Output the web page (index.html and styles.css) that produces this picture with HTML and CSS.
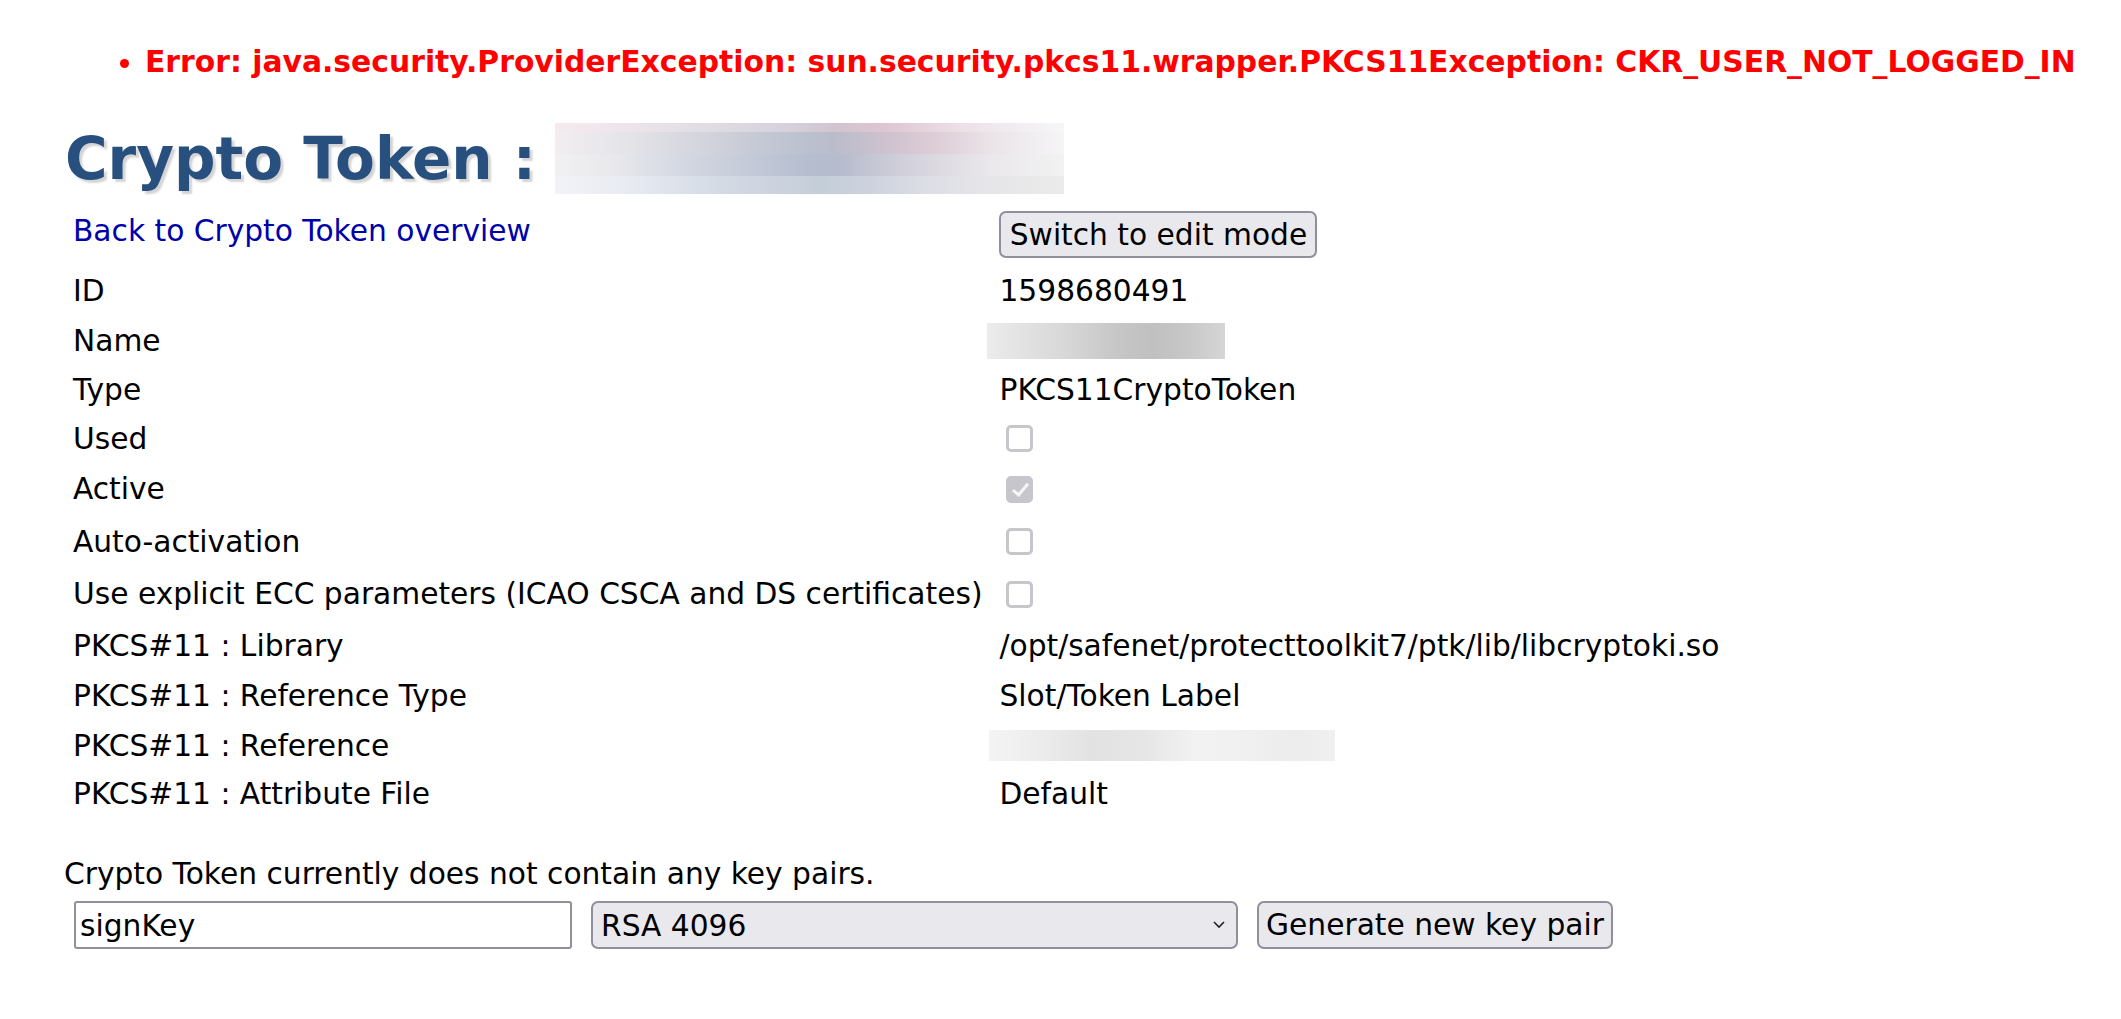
FILE: index.html
```html
<!DOCTYPE html>
<html lang="en">
<head>
<meta charset="utf-8">
<title>Crypto Token</title>
<link rel="stylesheet" href="styles.css">
</head>
<body>
<div class="page">
  <ul class="errors">
    <li>Error: java.security.ProviderException: sun.security.pkcs11.wrapper.PKCS11Exception: CKR_USER_NOT_LOGGED_IN</li>
  </ul>

  <h1 class="title"><span class="title-text">Crypto Token :</span><span class="blur blur-title"></span></h1>

  <div class="details">
    <div class="label first"><a class="back" href="#">Back to Crypto Token overview</a></div>
    <div class="value first"><button class="btn btn-edit" type="button">Switch to edit mode</button></div>

    <div class="label">ID</div>
    <div class="value">1598680491</div>

    <div class="label">Name</div>
    <div class="value"><span class="blur blur-name"></span></div>

    <div class="label">Type</div>
    <div class="value">PKCS11CryptoToken</div>

    <div class="label">Used</div>
    <div class="value"><span class="check"></span></div>

    <div class="label">Active</div>
    <div class="value"><span class="check checked"></span></div>

    <div class="label">Auto-activation</div>
    <div class="value"><span class="check"></span></div>

    <div class="label">Use explicit ECC parameters (ICAO CSCA and DS certificates)</div>
    <div class="value"><span class="check"></span></div>

    <div class="label">PKCS#11 : Library</div>
    <div class="value">/opt/safenet/protecttoolkit7/ptk/lib/libcryptoki.so</div>

    <div class="label">PKCS#11 : Reference Type</div>
    <div class="value">Slot/Token Label</div>

    <div class="label">PKCS#11 : Reference</div>
    <div class="value"><span class="blur blur-ref"></span></div>

    <div class="label">PKCS#11 : Attribute File</div>
    <div class="value">Default</div>
  </div>

  <p class="note">Crypto Token currently does not contain any key pairs.</p>

  <form class="keygen" action="#">
    <input class="field" type="text" value="signKey">
    <div class="select-wrap">
      <select class="select">
        <option>RSA 4096</option>
      </select>
      <svg class="chev" width="14" height="10" viewBox="0 0 14 10"><path d="M2 2 L7 7 L12 2" fill="none" stroke="#222" stroke-width="1.6"/></svg>
    </div>
    <button class="btn btn-gen" type="button">Generate new key pair</button>
  </form>
</div>
</body>
</html>
```

FILE: styles.css
```css
html, body {
  margin: 0;
  padding: 0;
  background: #ffffff;
}

body {
  font-family: "DejaVu Sans", Verdana, sans-serif;
  font-size: 29.7px;
  color: #000000;
}

.page {
  padding: 0 0 0 64px;
}

.errors {
  margin: 0;
  padding: 44px 0 0 81px;
  list-style: disc;
  color: #ff0000;
  font-weight: bold;
  font-size: 29.8px;
  line-height: 36px;
}

.title {
  display: flex;
  align-items: center;
  margin: 43px 0 0 1px;
  height: 71px;
  font-size: 58px;
  font-weight: bold;
  color: #28507f;
  text-shadow: 3px 3px 2px #d4d4d4;
}

.title-text {
  margin-right: 19px;
}

.blur {
  display: inline-block;
}

.blur-title {
  width: 509px;
  height: 71px;
  background:
    linear-gradient(90deg, #f5eaee 0%, #ede4ea 15%, #e0dce4 30%, #d6d2dc 45%, #d1c4d0 55%, #ddc6d0 65%, #ede0e6 80%, #f2eef2 92%, #f6f6f7 100%) 0 0 / 100% 9px no-repeat,
    linear-gradient(90deg, #f2edf1 0%, #e6e6ea 12%, #d8d8e0 25%, #c8cbd6 38%, #bcc2d0 48%, #bbbccb 55%, #cdc1ce 64%, #dcccd6 74%, #ebe4e9 86%, #f5f5f6 100%) 0 9px / 100% 22px no-repeat,
    linear-gradient(90deg, #f1f1f3 0%, #e8e8ec 12%, #d4d8e2 25%, #c4cad8 38%, #b5bdcf 50%, #b6bccd 56%, #ccccd8 66%, #dedae2 76%, #ebe8ec 86%, #f2f2f2 100%) 0 31px / 100% 22px no-repeat,
    linear-gradient(90deg, #f2f3f7 0%, #e8ebf2 14%, #d8dee8 28%, #cdd4df 42%, #c4ced9 52%, #cdd2de 62%, #dedfe6 74%, #e6e6e9 86%, #ebebeb 100%) 0 53px / 100% 18px no-repeat;
}

.blur-name {
  width: 238px;
  height: 36px;
  margin-left: -12px;
  background: linear-gradient(90deg, #ececec 0%, #e2e2e2 15%, #d6d6d6 35%, #c6c6c6 55%, #c0c0c0 70%, #c8c8c8 85%, #d6d6d6 100%);
}

.blur-ref {
  width: 346px;
  height: 31px;
  margin-left: -10px;
  background: linear-gradient(90deg, #f4f4f4 0%, #ececec 15%, #e2e2e2 30%, #e6e6e6 45%, #f2f2f2 60%, #f0f0f0 75%, #ececec 88%, #f0f0f0 100%);
}

.details {
  display: grid;
  grid-template-columns: max-content 1fr;
  grid-template-rows: 60px 50px 50px 48px 49px 52px 53px 52px 51px 50px 49px 48px;
  column-gap: 17px;
  margin: 12px 0 0 9px;
  line-height: 34px;
}

.label, .value {
  display: flex;
  align-items: center;
  white-space: nowrap;
}

.label.first {
  align-items: flex-start;
  padding-top: 8px;
}

.value.first {
  align-items: flex-start;
  padding-top: 5px;
}

.back {
  color: #0000aa;
  text-decoration: none;
}

.btn {
  font-family: "DejaVu Sans", Verdana, sans-serif;
  font-size: 29.7px;
  color: #000000;
  background: #e9e9ed;
  border: 2px solid #8f8f9d;
  border-radius: 7px;
  padding: 0 6px;
  line-height: 34px;
  white-space: nowrap;
}

.btn-edit {
  height: 47px;
  width: 318px;
}

.check {
  display: inline-block;
  box-sizing: border-box;
  width: 27px;
  height: 27px;
  margin-left: 7px;
  border: 3px solid #c6c6cc;
  border-radius: 5px;
  background: #ffffff;
  position: relative;
}

.check.checked {
  background: #c6c6cc;
}

.check.checked::after {
  content: "";
  position: absolute;
  left: 7px;
  top: 1px;
  width: 6px;
  height: 13px;
  border-right: 3px solid #f6f6f6;
  border-bottom: 3px solid #f6f6f6;
  transform: rotate(40deg);
}

.note {
  margin: 39px 0 0 0;
  line-height: 34px;
}

.keygen {
  display: flex;
  align-items: center;
  gap: 19px;
  margin: 10px 0 0 10px;
}

.field {
  box-sizing: border-box;
  width: 498px;
  height: 48px;
  font-family: "DejaVu Sans", Verdana, sans-serif;
  font-size: 29.7px;
  color: #000000;
  border: 2px solid #8f8f9d;
  border-radius: 3px;
  padding: 0 4px;
  background: #ffffff;
}

.select-wrap {
  position: relative;
  width: 647px;
  height: 48px;
}

.select {
  -webkit-appearance: none;
  appearance: none;
  box-sizing: border-box;
  width: 100%;
  height: 48px;
  font-family: "DejaVu Sans", Verdana, sans-serif;
  font-size: 29.7px;
  color: #000000;
  background: #e9e9ed;
  border: 2px solid #8f8f9d;
  border-radius: 7px;
  padding: 0 8px;
}

.chev {
  position: absolute;
  right: 12px;
  top: 19px;
}

.btn-gen {
  box-sizing: border-box;
  height: 48px;
  width: 356px;
  padding: 0 4px;
}
```
